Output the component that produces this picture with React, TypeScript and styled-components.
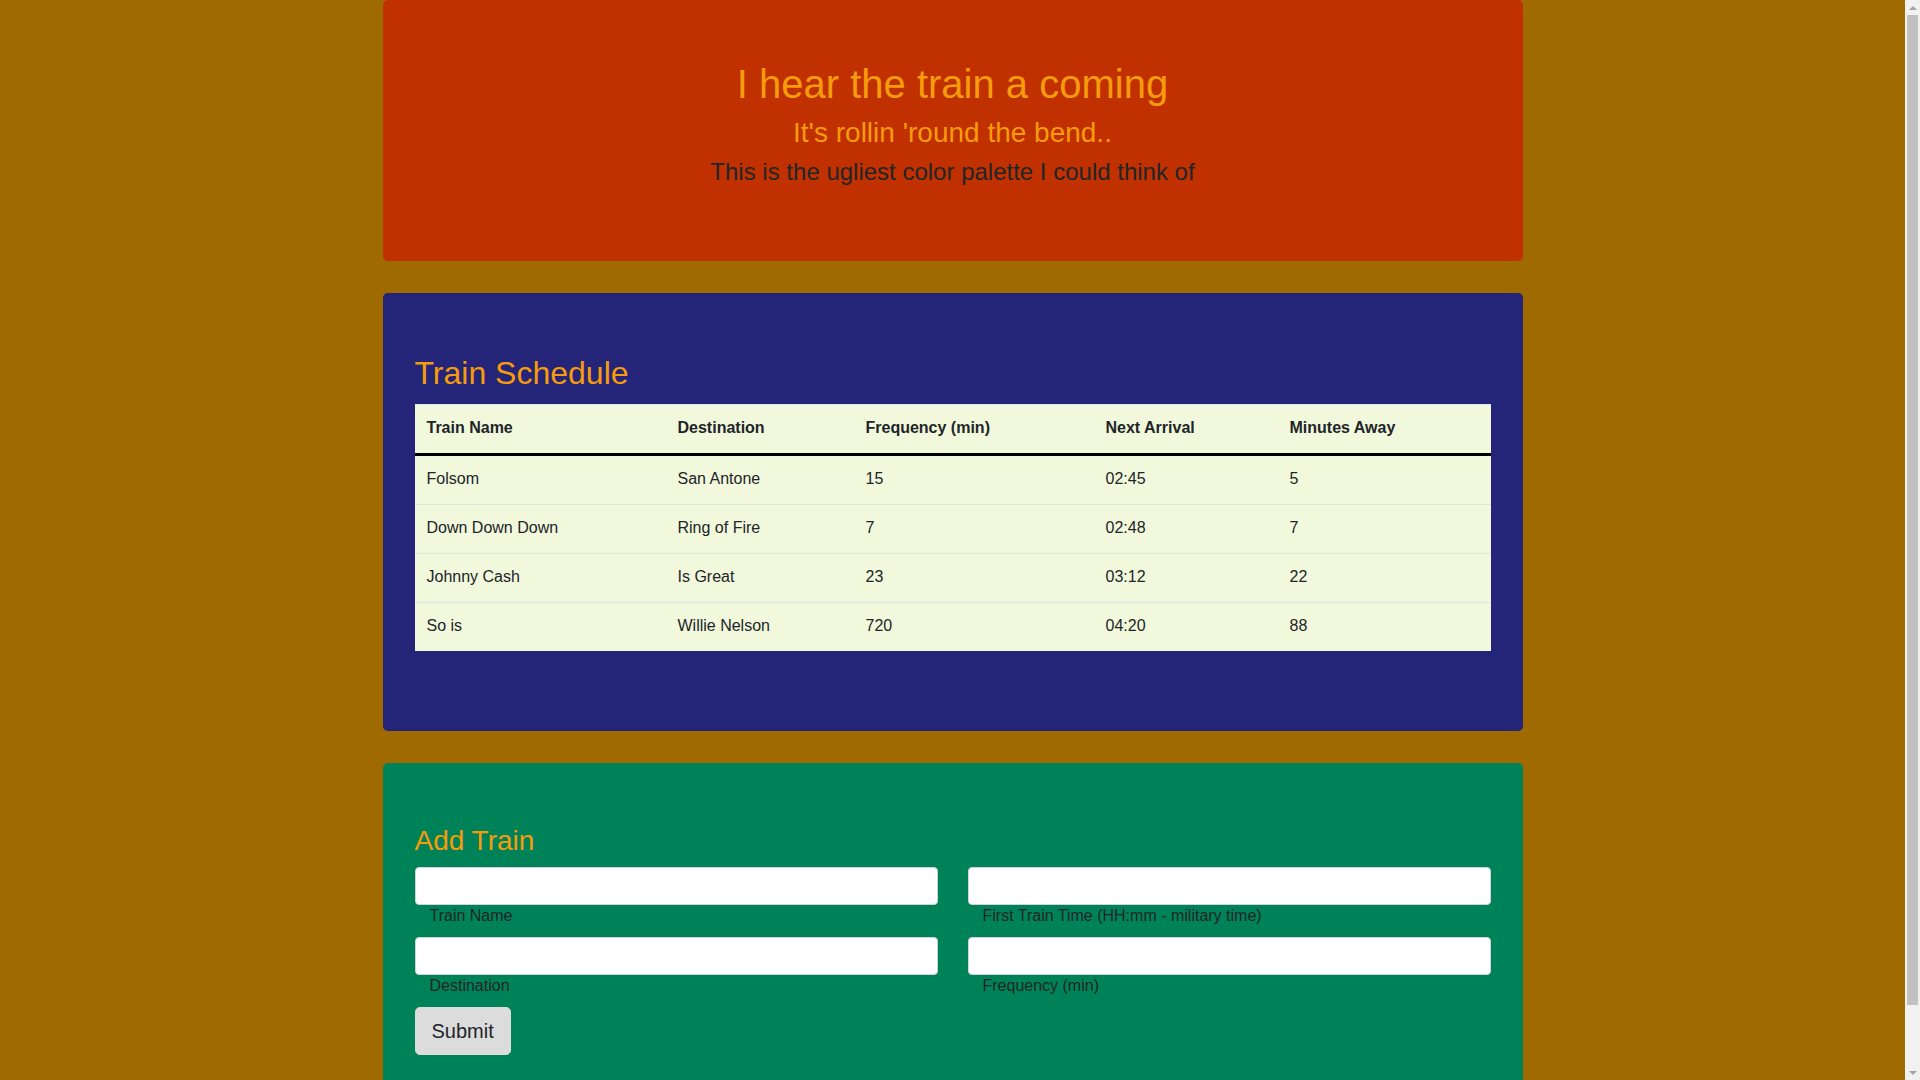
import React from 'react';
import styled, { createGlobalStyle } from 'styled-components';

//palette
const colors = {
  page: '#9f6a00',
  red: '#c13100',
  blue: '#242478',
  green: '#008258',
  orange: '#f59b0c',
  ink: '#212529',
  tableBg: '#f1f8dc',
  rule: '#dee2e6',
};

//styled
const GlobalStyle = createGlobalStyle`
  html, body {
    margin: 0;
    padding: 0;
  }
  body {
    background-color: ${colors.page};
    font-family: "Liberation Sans", Arial, Helvetica, sans-serif;
    font-size: 16px;
    line-height: 1.5;
    color: ${colors.ink};
  }
  * {
    box-sizing: border-box;
  }
`;

// the reference was taken with a classic 15px scrollbar on the right
const Page = styled.div`
  padding-right: 15px;
`;

const ScrollTrack = styled.div`
  position: fixed;
  top: 0;
  right: 0;
  width: 15px;
  height: 100vh;
  background-color: #f1f1f1;
  display: flex;
  flex-direction: column;
  align-items: center;
`;

const ScrollArrow = styled.div<{ $down?: boolean }>`
  height: 15px;
  width: 15px;
  display: flex;
  align-items: center;
  justify-content: center;
  &::before {
    content: "";
    border-left: 4px solid transparent;
    border-right: 4px solid transparent;
    ${(p) =>
      p.$down ? 'border-top: 4px solid #a3a3a3;' : 'border-bottom: 4px solid #a3a3a3;'}
  }
`;

const ScrollThumb = styled.div`
  flex: 1;
  width: 11px;
  margin-bottom: 60px;
  background-color: #c1c1c1;
`;

const Container = styled.div`
  max-width: 1140px;
  margin: 0 auto;
`;

const Panel = styled.section<{ $bg: string }>`
  background-color: ${(p) => p.$bg};
  border-radius: 4.8px;
  margin-bottom: 32px;
  padding: 61px 32px 64px;
`;

const Jumbotron = styled(Panel)`
  padding: 60px 32px 67px;
  text-align: center;
`;

const Title = styled.h1`
  margin: 0 0 8px;
  font-size: 40px;
  font-weight: 400;
  line-height: 48px;
  color: ${colors.orange};
`;

const Subtitle = styled.h3`
  margin: 0 0 8px;
  font-size: 28px;
  font-weight: 400;
  line-height: 33.6px;
  color: ${colors.orange};
`;

const Tagline = styled.h4`
  margin: 0 0 8px;
  font-size: 24px;
  font-weight: 400;
  line-height: 28.8px;
  color: ${colors.ink};
`;

const SectionTitle = styled.h2<{ $size: number; $gap: number }>`
  margin: 0 0 ${(p) => p.$gap}px;
  font-size: ${(p) => p.$size}px;
  font-weight: 400;
  line-height: ${(p) => p.$size * 1.2}px;
  color: ${colors.orange};
`;

const Table = styled.table`
  width: 100%;
  border-collapse: collapse;
  table-layout: fixed;
  background-color: ${colors.tableBg};
  margin-bottom: 16px;
`;

const Col = styled.col<{ $w: number }>`
  width: ${(p) => p.$w}px;
`;

const Th = styled.th`
  text-align: left;
  font-weight: 700;
  padding: 11px 12px 13px;
  border-top: 1px solid ${colors.rule};
  border-bottom: 3px solid #000;
  line-height: 24px;
`;

const Td = styled.td`
  padding: 11px 12px 13px;
  border-top: 1px solid ${colors.rule};
  line-height: 24px;
`;

const FormGrid = styled.div`
  display: grid;
  grid-template-columns: 1fr 1fr;
  column-gap: 30px;
`;

const Field = styled.div`
  display: flex;
  flex-direction: column;
`;

const Input = styled.input`
  display: block;
  width: 100%;
  height: 38px;
  padding: 6px 12px;
  font-family: inherit;
  font-size: 16px;
  color: #495057;
  background-color: #fff;
  border: 1px solid #ced4da;
  border-radius: 4px;
  outline: none;
`;

const FieldLabel = styled.label`
  display: block;
  padding-left: 15px;
  margin-bottom: 11px;
  font-size: 16px;
  line-height: 21px;
  color: ${colors.ink};
`;

const SubmitButton = styled.button`
  display: inline-block;
  padding: 8px 16px;
  font-family: inherit;
  font-size: 20px;
  line-height: 30px;
  color: ${colors.ink};
  background-color: #dcdcdc;
  border: 1px solid #dcdcdc;
  border-radius: 4.8px;
  cursor: pointer;
`;

//data
const trains = [
  { name: 'Folsom', dest: 'San Antone', freq: '15', next: '02:45', away: '5' },
  { name: 'Down Down Down', dest: 'Ring of Fire', freq: '7', next: '02:48', away: '7' },
  { name: 'Johnny Cash', dest: 'Is Great', freq: '23', next: '03:12', away: '22' },
  { name: 'So is', dest: 'Willie Nelson', freq: '720', next: '04:20', away: '88' },
];

const columns = [
  { label: 'Train Name', w: 251 },
  { label: 'Destination', w: 188 },
  { label: 'Frequency (min)', w: 240 },
  { label: 'Next Arrival', w: 184 },
  { label: 'Minutes Away', w: 213 },
];

const fields = [
  { id: 'train-name', label: 'Train Name' },
  { id: 'first-time', label: 'First Train Time (HH:mm - military time)' },
  { id: 'destination', label: 'Destination' },
  { id: 'frequency', label: 'Frequency (min)' },
];

const App: React.FC = () => {
  return (
    <Page>
      <GlobalStyle />
      <Container>
        <Jumbotron $bg={colors.red}>
          <Title>I hear the train a coming</Title>
          <Subtitle>It's rollin 'round the bend..</Subtitle>
          <Tagline>This is the ugliest color palette I could think of</Tagline>
        </Jumbotron>

        <Panel $bg={colors.blue}>
          <SectionTitle $size={32} $gap={11}>Train Schedule</SectionTitle>
          <Table>
            <colgroup>
              {columns.map((c) => (
                <Col key={c.label} $w={c.w} />
              ))}
            </colgroup>
            <thead>
              <tr>
                {columns.map((c) => (
                  <Th key={c.label}>{c.label}</Th>
                ))}
              </tr>
            </thead>
            <tbody>
              {trains.map((t) => (
                <tr key={t.name}>
                  <Td>{t.name}</Td>
                  <Td>{t.dest}</Td>
                  <Td>{t.freq}</Td>
                  <Td>{t.next}</Td>
                  <Td>{t.away}</Td>
                </tr>
              ))}
            </tbody>
          </Table>
        </Panel>

        <Panel $bg={colors.green}>
          <SectionTitle as="h3" $size={28} $gap={10}>Add Train</SectionTitle>
          <form onSubmit={(e) => e.preventDefault()}>
            <FormGrid>
              {fields.map((f) => (
                <Field key={f.id}>
                  <Input id={f.id} type="text" />
                  <FieldLabel htmlFor={f.id}>{f.label}</FieldLabel>
                </Field>
              ))}
            </FormGrid>
            <SubmitButton type="submit">Submit</SubmitButton>
          </form>
        </Panel>
      </Container>
      <ScrollTrack aria-hidden>
        <ScrollArrow />
        <ScrollThumb />
        <ScrollArrow $down />
      </ScrollTrack>
    </Page>
  );
};

export default App;
